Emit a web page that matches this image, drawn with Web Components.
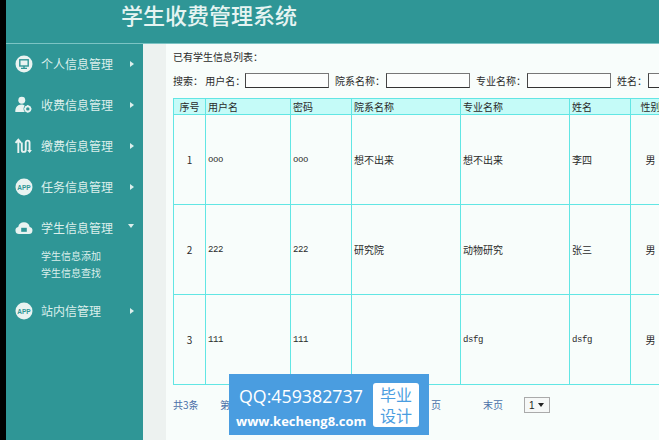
<!DOCTYPE html>
<html lang="zh">
<head>
<meta charset="utf-8">
<title>学生收费管理系统</title>
<style>
  html, body { margin: 0; height: 100%; overflow: hidden; background: #000; }
  body { font-family: "Liberation Sans", "Noto Sans CJK SC", sans-serif; }
</style>
</head>
<body>
<app-shell>
  <app-header slot="header">学生收费管理系统</app-header>
  <side-menu slot="menu">
    <menu-item icon="monitor">个人信息管理</menu-item>
    <menu-item icon="user">收费信息管理</menu-item>
    <menu-item icon="arrows">缴费信息管理</menu-item>
    <menu-item icon="app">任务信息管理</menu-item>
    <menu-item icon="cloud" open>学生信息管理
      <span slot="sub">学生信息添加</span>
      <span slot="sub">学生信息查找</span>
    </menu-item>
    <menu-item icon="app">站内信管理</menu-item>
  </side-menu>
  <student-panel></student-panel>
</app-shell>
<promo-badge></promo-badge>

<script>
// Custom Element: <app-shell>
class AppShell extends HTMLElement {
  constructor() {
    super();
    this.attachShadow({ mode: 'open' });
    this.shadowRoot.innerHTML = `
      <style>
        :host {
          display: block;
          height: 440px;
          margin-left: 6px;
          background-color: #2f9696;
          overflow: hidden;
        }
        .body {
          display: flex;
          height: 396px;
        }
        .gutter {
          width: 23px;
          flex: none;
          background-color: #edf2f0;
        }
        .main {
          flex: 1;
          min-width: 0;
          overflow: hidden;
          background-color: #f8fdfb;
        }
      </style>
      <slot name="header"></slot>
      <div class="body">
        <slot name="menu"></slot>
        <div class="gutter"></div>
        <div class="main"><slot></slot></div>
      </div>
    `;
  }
}
customElements.define('app-shell', AppShell);

// Custom Element: <app-header>
class AppHeader extends HTMLElement {
  constructor() {
    super();
    this.attachShadow({ mode: 'open' });
    this.shadowRoot.innerHTML = `
      <style>
        :host {
          display: block;
          box-sizing: border-box;
          height: 44px;
          padding: 2px 0 0 115px;
          border-bottom: 1px solid #7cc4c4;
          color: #e6f4f2;
          font: 500 22px/29px "Liberation Sans", "Noto Sans CJK SC", sans-serif;
        }
      </style>
      <slot></slot>
    `;
  }
}
customElements.define('app-header', AppHeader);

// Custom Element: <side-menu>
class SideMenu extends HTMLElement {
  constructor() {
    super();
    this.attachShadow({ mode: 'open' });
    this.shadowRoot.innerHTML = `
      <style>
        :host {
          display: block;
          width: 137px;
          flex: none;
          margin-top: -1px;
        }
      </style>
      <slot></slot>
    `;
  }
}
customElements.define('side-menu', SideMenu);

const MENU_ICONS = {
  monitor: `<svg width="20" height="20" viewBox="0 0 20 20">
      <circle cx="10" cy="10" r="8.5" fill="#e9f3f1"/>
      <rect x="5.8" y="5.8" width="8.4" height="6.2" fill="none" stroke="#2f9696" stroke-width="1.4"/>
      <path d="M10 12v2M7 14.4h6" stroke="#2f9696" stroke-width="1.4" fill="none"/>
    </svg>`,
  user: `<svg width="19" height="18" viewBox="0 0 22 20">
      <circle cx="9" cy="4.5" r="4" fill="#e9f3f1"/>
      <path d="M1.5 18c0-5 2.5-8.5 7-8.5 1.8 0 3 .5 4 1.3-1.8 1.800-2 5 0 7.200z" fill="#e9f3f1"/>
      <circle cx="16" cy="14.5" r="3" fill="none" stroke="#e9f3f1" stroke-width="2"/>
      <path d="M16 10v1.500M16 17.500V19M11.800 14.500h1.200M19 14.500h1.200" stroke="#e9f3f1" stroke-width="1.500"/>
    </svg>`,
  arrows: `<svg width="19" height="18" viewBox="0 0 22 20">
      <path d="M5 18V3.500M1.800 6.500 5 2.800l3.200 3.700" fill="none" stroke="#e9f3f1" stroke-width="2.200"/>
      <path d="M9 6v8.500a2.300 2.300 0 0 0 4.600 0V6a2.200 2.200 0 0 1 2.300-2.200A2.200 2.200 0 0 1 18 6v10" fill="none" stroke="#e9f3f1" stroke-width="2.200"/>
      <path d="M15.200 14.500 18 18l2.800-3.500z" fill="#e9f3f1"/>
    </svg>`,
  app: `<svg width="20" height="20" viewBox="0 0 20 20">
      <circle cx="10" cy="10" r="8.5" fill="#e9f3f1"/>
      <text x="10" y="12.500" text-anchor="middle" font-family="Liberation Sans, sans-serif" font-size="6.500" font-weight="700" fill="#2f9696">APP</text>
    </svg>`,
  cloud: `<svg width="20" height="20" viewBox="0 0 20 20">
      <path d="M5 16a3.600 3.600 0 0 1-.8-7.100 5.900 5.900 0 0 1 11.500 0A3.600 3.600 0 0 1 15 16z" fill="#e9f3f1"/>
      <rect x="7.200" y="9.800" width="5.600" height="4" fill="#2f9696"/>
    </svg>`
};

// Custom Element: <menu-item>
class MenuItem extends HTMLElement {
  constructor() {
    super();
    this.attachShadow({ mode: 'open' });
    const open = this.hasAttribute('open');
    this.shadowRoot.innerHTML = `
      <style>
        :host {
          display: block;
          color: #dcefec;
          font: 12px "Noto Sans CJK SC", sans-serif;
        }
        .row {
          display: flex;
          align-items: center;
          height: 41px;
          padding-left: 8px;
        }
        .icon {
          display: flex;
          width: 27px;
          flex: none;
        }
        .label { flex: 1; }
        .arrow {
          width: 0;
          height: 0;
          border-style: solid;
          border-color: transparent;
        }
        .arrow.closed {
          margin-right: 9px;
          border-width: 3px 0 3px 4px;
          border-left-color: #dcefec;
        }
        .arrow.down {
          margin-right: 9px;
          margin-top: -3px;
          border-width: 4px 3px 0;
          border-top-color: #dcefec;
        }
        .sub {
          display: none;
          flex-direction: column;
          margin-top: -1px;
          padding: 0 0 9px 35px;
          font-size: 10px;
          line-height: 17px;
        }
        .sub.open { display: flex; }
      </style>
      <div class="row">
        <span class="icon">${MENU_ICONS[this.getAttribute('icon')]}</span>
        <span class="label"><slot></slot></span>
        <span class="arrow ${open ? 'down' : 'closed'}"></span>
      </div>
      <div class="sub ${open ? 'open' : ''}"><slot name="sub"></slot></div>
    `;
  }
}
customElements.define('menu-item', MenuItem);

const STUDENTS = [
  ['1', 'ooo', 'ooo', '想不出来', '想不出来', '李四', '男'],
  ['2', '222', '222', '研究院', '动物研究', '张三', '男'],
  ['3', '111', '111', '', 'dsfg', 'dsfg', '男']
];

// Custom Element: <student-panel>
class StudentPanel extends HTMLElement {
  constructor() {
    super();
    this.attachShadow({ mode: 'open' });
    const rows = STUDENTS.map(s => `
      <tr>
        <td class="c">${s[0]}</td><td class="m">${s[1]}</td><td class="m">${s[2]}</td>
        <td>${s[3]}</td><td class="${s[4] === 'dsfg' ? 'm' : ''}">${s[4]}</td>
        <td class="${s[5] === 'dsfg' ? 'm' : ''}">${s[5]}</td><td class="c">${s[6]}</td><td></td>
      </tr>`).join('');
    this.shadowRoot.innerHTML = `
      <style>
        :host {
          display: block;
          width: 600px;
          padding: 6px 0 0 7px;
          color: #2a2a2a;
          font: 10px/14px "Noto Sans CJK SC", sans-serif;
        }
        .caption { height: 23px; }
        .search {
          display: flex;
          align-items: center;
          height: 15px;
          white-space: nowrap;
        }
        .search label { flex: none; }
        .search .first { width: 71px; }
        .search input + label { margin-left: 6px; }
        .search input {
          box-sizing: border-box;
          width: 84px;
          height: 15px;
          margin: 0 0 0 1px;
          padding: 0;
          background: #fcfefd;
          border: 1px solid #777;
          border-bottom-color: #333;
          border-left-color: #444;
          flex: none;
        }
        table {
          width: 600px;
          margin-top: 10px;
          table-layout: fixed;
          border-collapse: collapse;
        }
        th, td {
          padding: 0 0 0 2px;
          border: 1px solid #62e6e4;
          overflow: hidden;
          white-space: nowrap;
          font-weight: 400;
          text-align: left;
        }
        th {
          height: 15px;
          background-color: #c5fbf8;
        }
        td { height: 89px; }
        .c, th.c { padding: 0; text-align: center; }
        .m {
          font: 9px "Liberation Mono", monospace;
          letter-spacing: -.4px;
        }
      </style>
      <div class="caption">已有学生信息列表：</div>
      <div class="search">
        <label class="first">搜索： 用户名：</label><input>
        <label>院系名称：</label><input>
        <label>专业名称：</label><input>
        <label>姓名：</label><input>
      </div>
      <table>
        <colgroup>
          <col style="width:32px"><col style="width:85px"><col style="width:61px">
          <col style="width:109px"><col style="width:109px"><col style="width:61px">
          <col style="width:40px"><col>
        </colgroup>
        <tr>
          <th class="c">序号</th><th>用户名</th><th>密码</th><th>院系名称</th>
          <th>专业名称</th><th>姓名</th><th class="c">性别</th><th></th>
        </tr>
        ${rows}
      </table>
      <pager-bar></pager-bar>
    `;
  }
}
customElements.define('student-panel', StudentPanel);

// Custom Element: <pager-bar>
class PagerBar extends HTMLElement {
  constructor() {
    super();
    this.attachShadow({ mode: 'open' });
    this.shadowRoot.innerHTML = `
      <style>
        :host {
          display: flex;
          align-items: center;
          height: 16px;
          margin-top: 12px;
          color: #4a70a8;
        }
        span { flex: none; }
        .total { width: 47px; }
        .nth { width: 211px; }
        .last-pad { width: 52px; }
        .end { width: 41px; }
        .sel {
          display: flex;
          align-items: center;
          box-sizing: border-box;
          width: 26px;
          height: 16px;
          padding-left: 4px;
          gap: 3px;
          color: #222;
          background: #f6f8f7;
          border: 1px solid #aaa;
          font: 10px "Liberation Sans", sans-serif;
        }
        .sel i {
          width: 0;
          height: 0;
          border: solid transparent;
          border-width: 4px 3px 0;
          border-top-color: #222;
        }
      </style>
      <span class="total">共3条</span>
      <span class="nth">第</span>
      <span class="last-pad">页</span>
      <span class="end">末页</span>
      <span class="sel">1<i></i></span>
    `;
  }
}
customElements.define('pager-bar', PagerBar);

// Custom Element: <promo-badge> lies over the page, bottom centre
class PromoBadge extends HTMLElement {
  constructor() {
    super();
    this.attachShadow({ mode: 'open' });
    this.shadowRoot.innerHTML = `
      <style>
        :host {
          position: absolute;
          left: 229px;
          top: 374px;
          box-sizing: border-box;
          display: flex;
          align-items: center;
          width: 200px;
          height: 61px;
          padding: 0 10px 0 7px;
          background-color: #4a9de0;
          color: #fff;
        }
        .text {
          flex: 1;
          min-width: 0;
          align-self: flex-start;
          padding-top: 10px;
          white-space: nowrap;
        }
        .qq {
          margin-left: 3px;
          font: 17.8px/24px "Open Sans", sans-serif;
        }
        .site {
          margin-top: 3px;
          font: 700 13px/20px "Open Sans", sans-serif;
        }
        .tag {
          box-sizing: border-box;
          width: 46px;
          height: 44px;
          padding-top: 2px;
          border-radius: 3px;
          background-color: #fff;
          color: #4a9de0;
          text-align: center;
          font: 16px/21px "Liberation Sans", "Noto Sans CJK SC", sans-serif;
        }
      </style>
      <div class="text">
        <div class="qq">QQ:459382737</div>
        <div class="site">www.kecheng8.com</div>
      </div>
      <div class="tag">毕业<br>设计</div>
    `;
  }
}
customElements.define('promo-badge', PromoBadge);
</script>
</body>
</html>
